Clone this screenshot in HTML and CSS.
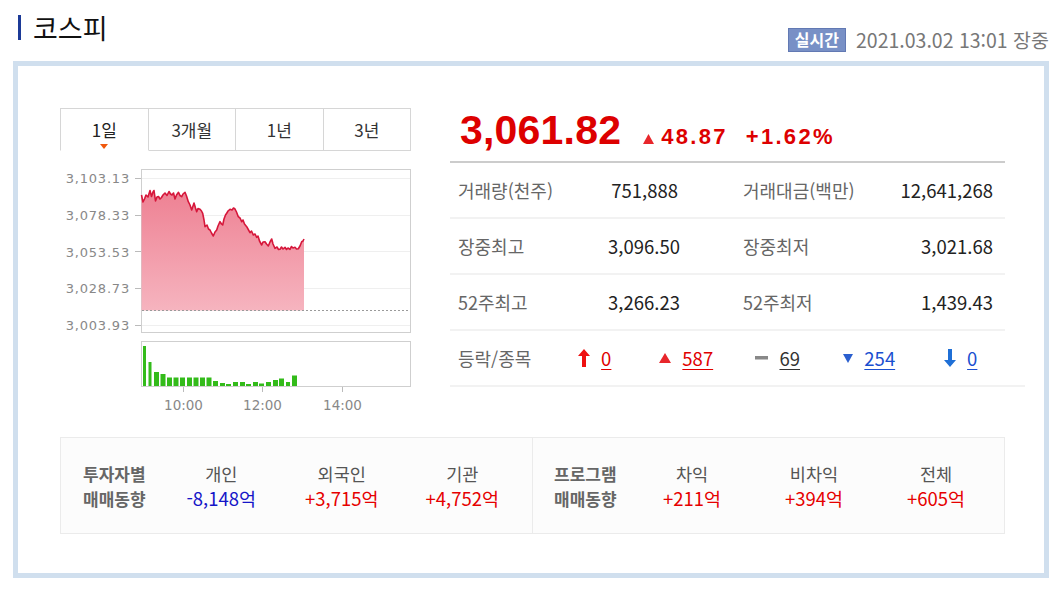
FILE: index.html
```html
<!DOCTYPE html>
<html lang="ko">
<head>
<meta charset="utf-8">
<title>코스피</title>
<link rel="stylesheet" href="styles.css">
</head>
<body>
<div class="header">
  <h1 class="title">코스피</h1>
  <div class="meta"><span class="badge">실시간</span><span class="date">2021.03.02 13:01 장중</span></div>
</div>
<div class="panel">
  <div class="top">
    <div class="chartcol">
      <ul class="tabs">
        <li class="on">1일<i class="caret"></i></li>
        <li>3개월</li>
        <li>1년</li>
        <li>3년</li>
      </ul>
      <svg class="chart" width="351" height="264" viewBox="0 0 351 264">
        <defs>
          <linearGradient id="fillg" x1="0" y1="0" x2="0" y2="1">
            <stop offset="0" stop-color="#ee8193"/>
            <stop offset="1" stop-color="#f6b4bf"/>
          </linearGradient>
        </defs>
        <g transform="translate(-60,-151)">
          <rect x="141.5" y="169.5" width="269" height="163" fill="#fff" stroke="#cfcfcf"/>
          <g stroke="#efefef" stroke-width="1">
            <line x1="142" y1="178.5" x2="410" y2="178.5"/>
            <line x1="142" y1="215.5" x2="410" y2="215.5"/>
            <line x1="142" y1="251.5" x2="410" y2="251.5"/>
            <line x1="142" y1="288.5" x2="410" y2="288.5"/>
            <line x1="142" y1="325.5" x2="410" y2="325.5"/>
          </g>
          <g stroke="#bbb" stroke-width="1">
            <line x1="135" y1="178.5" x2="141" y2="178.5"/>
            <line x1="135" y1="215.5" x2="141" y2="215.5"/>
            <line x1="135" y1="251.5" x2="141" y2="251.5"/>
            <line x1="135" y1="288.5" x2="141" y2="288.5"/>
            <line x1="135" y1="325.5" x2="141" y2="325.5"/>
          </g>
          <g class="ylab">
            <text x="130" y="178.5">3,103.13</text>
            <text x="130" y="215.5">3,078.33</text>
            <text x="130" y="252">3,053.53</text>
            <text x="130" y="288.5">3,028.73</text>
            <text x="130" y="325.5">3,003.93</text>
          </g>
          <path d="M141.5,310.5 L141.5,195 143,202 144.5,199 146,195 148,197 150,190.5 151.5,196.5 153,192 154,190.5 155.5,201 157,197 158.5,196.5 160,199 161.5,197.5 163,195 165,193 167,195.5 169,191.5 170.5,194 172,195 173.5,193 175,199 176.5,195 178.5,192.3 180,195.5 181.7,196.7 183,194 185,192.3 186.5,196 188.3,201.7 190,205 191.7,210 193,206 194,203 195.5,208 196.7,211.7 198,208.5 200,209.3 201.5,211 202.7,213.3 204,220 205,226.7 207,225 208.5,229 210,230 211.5,233 213.3,236 215,232 216.7,230 218,226 220,221.7 221.5,224 222.7,225 224,219 225.5,215 226.7,213.3 228,211 230,209.3 232,210 233.5,208 235,209 236.5,212 238.3,216.7 240,218 241.7,221.7 243,220 244.5,224 246.7,226.7 248,229 250,232.7 251.5,231 253.3,235 255,234 256.7,237.3 258,236 259.5,241 261.7,245 263,242 265,241.7 266.5,244 268.3,246 270,242 271.7,239 273,244 275,248.3 277,247 278.5,249.5 280,249.3 281.5,247 283,249 285,247.3 286.5,249.5 288,248 290,249.3 291.5,246.5 293,248 295,247.3 296.5,249 298.3,248.7 300,246 301.7,241.7 303,241 304,239 L304,310.5 Z" fill="url(#fillg)"/>
          <polyline fill="none" stroke="#d6173b" stroke-width="1.6" stroke-linejoin="round" points="141.5,195 143,202 144.5,199 146,195 148,197 150,190.5 151.5,196.5 153,192 154,190.5 155.5,201 157,197 158.5,196.5 160,199 161.5,197.5 163,195 165,193 167,195.5 169,191.5 170.5,194 172,195 173.5,193 175,199 176.5,195 178.5,192.3 180,195.5 181.7,196.7 183,194 185,192.3 186.5,196 188.3,201.7 190,205 191.7,210 193,206 194,203 195.5,208 196.7,211.7 198,208.5 200,209.3 201.5,211 202.7,213.3 204,220 205,226.7 207,225 208.5,229 210,230 211.5,233 213.3,236 215,232 216.7,230 218,226 220,221.7 221.5,224 222.7,225 224,219 225.5,215 226.7,213.3 228,211 230,209.3 232,210 233.5,208 235,209 236.5,212 238.3,216.7 240,218 241.7,221.7 243,220 244.5,224 246.7,226.7 248,229 250,232.7 251.5,231 253.3,235 255,234 256.7,237.3 258,236 259.5,241 261.7,245 263,242 265,241.7 266.5,244 268.3,246 270,242 271.7,239 273,244 275,248.3 277,247 278.5,249.5 280,249.3 281.5,247 283,249 285,247.3 286.5,249.5 288,248 290,249.3 291.5,246.5 293,248 295,247.3 296.5,249 298.3,248.7 300,246 301.7,241.7 303,241 304,239"/>
          <line x1="142" y1="310.5" x2="410" y2="310.5" stroke="#9a9a9a" stroke-dasharray="2,2"/>
          <rect x="141.5" y="341.5" width="269" height="45" fill="#fff" stroke="#cfcfcf"/>
          <g fill="#33bb1a">
            <rect x="143" y="346" width="3" height="40"/>
            <rect x="148.5" y="362" width="3" height="24"/>
            <rect x="154" y="372" width="5" height="14"/>
            <rect x="160.5" y="374" width="5" height="12"/>
            <rect x="167" y="377.5" width="5" height="8.5"/>
            <rect x="173.5" y="377.5" width="5" height="8.5"/>
            <rect x="180" y="377.5" width="5" height="8.5"/>
            <rect x="187" y="377.5" width="5" height="8.5"/>
            <rect x="193.5" y="377.5" width="5" height="8.5"/>
            <rect x="200" y="377.5" width="5" height="8.5"/>
            <rect x="206.5" y="377.5" width="5" height="8.5"/>
            <rect x="213" y="381" width="5" height="5"/>
            <rect x="220" y="383" width="5" height="3"/>
            <rect x="226" y="384" width="5" height="2"/>
            <rect x="233" y="382" width="5" height="4"/>
            <rect x="240" y="382" width="5" height="4"/>
            <rect x="246" y="384" width="5" height="2"/>
            <rect x="253" y="382" width="5" height="4"/>
            <rect x="259" y="383.5" width="5" height="2.5"/>
            <rect x="266" y="382" width="5" height="4"/>
            <rect x="273" y="380" width="5" height="6"/>
            <rect x="279" y="378.5" width="5" height="7.5"/>
            <rect x="286" y="382" width="4" height="4"/>
            <rect x="292" y="375.5" width="5" height="10.5"/>
          </g>
          <g stroke="#bbb">
            <line x1="183.5" y1="387" x2="183.5" y2="392"/>
            <line x1="262.5" y1="387" x2="262.5" y2="392"/>
            <line x1="342.5" y1="387" x2="342.5" y2="392"/>
          </g>
          <g class="xlab">
            <text x="183.5" y="404.5">10:00</text>
            <text x="262.5" y="404.5">12:00</text>
            <text x="342.5" y="404.5">14:00</text>
          </g>
        </g>
      </svg>
    </div>
    <div class="infocol">
      <div class="price">
        <span class="now">3,061.82</span>
        <span class="chg"><svg class="tri" width="11" height="10" viewBox="0 0 11 10"><polygon points="5.5,0 11,10 0,10" fill="#e8262b"/></svg>48.87</span>
        <span class="rate">+1.62%</span>
      </div>
      <div class="row">
        <span class="lb">거래량(천주)</span><span class="val">751,888</span><span></span>
        <span class="lb">거래대금(백만)</span><span class="val">12,641,268</span>
      </div>
      <div class="row">
        <span class="lb">장중최고</span><span class="val">3,096.50</span><span></span>
        <span class="lb">장중최저</span><span class="val">3,021.68</span>
      </div>
      <div class="row">
        <span class="lb">52주최고</span><span class="val">3,266.23</span><span></span>
        <span class="lb">52주최저</span><span class="val">1,439.43</span>
      </div>
      <div class="updown">
        <span class="lb ulb">등락/종목</span>
        <span class="ud"><svg width="12" height="18" viewBox="0 0 12 18"><polygon points="6,0 12,7 8,7 8,18 4,18 4,7 0,7" fill="#ee1111"/></svg><a class="n red">0</a></span>
        <span class="ud"><svg width="12" height="10" viewBox="0 0 12 10"><polygon points="6,0 12,10 0,10" fill="#e8262b"/></svg><a class="n red">587</a></span>
        <span class="ud"><svg width="13" height="4" viewBox="0 0 13 4"><rect x="0" y="0" width="13" height="3.5" fill="#888"/></svg><a class="n gray">69</a></span>
        <span class="ud"><svg width="10" height="9" viewBox="0 0 10 9"><polygon points="0,0 10,0 5,9" fill="#2a5fcf"/></svg><a class="n blue">254</a></span>
        <span class="ud"><svg width="12" height="18" viewBox="0 0 12 18"><polygon points="4,0 8,0 8,11 12,11 6,18 0,11 4,11" fill="#1f6fd6"/></svg><a class="n blue">0</a></span>
      </div>
    </div>
  </div>
  <div class="trade">
    <div class="group g1">
      <div class="glabel">투자자별<br>매매동향</div>
      <div class="cell"><div class="cname">개인</div><div class="cval minus">-8,148억</div></div>
      <div class="cell"><div class="cname">외국인</div><div class="cval plus">+3,715억</div></div>
      <div class="cell"><div class="cname">기관</div><div class="cval plus">+4,752억</div></div>
    </div>
    <div class="group g2">
      <div class="glabel">프로그램<br>매매동향</div>
      <div class="cell"><div class="cname">차익</div><div class="cval plus">+211억</div></div>
      <div class="cell"><div class="cname">비차익</div><div class="cval plus">+394억</div></div>
      <div class="cell"><div class="cname">전체</div><div class="cval plus">+605억</div></div>
    </div>
  </div>
</div>
</body>
</html>
```

FILE: styles.css
```css
* { box-sizing: border-box; }
body {
  margin: 0;
  width: 1059px;
  background: #fff;
  color: #333;
  font-family: "Noto Sans CJK KR", "Noto Sans", sans-serif;
}
.header {
  display: flex;
  justify-content: space-between;
  height: 61px;
  padding: 0 10px 0 18px;
}
.title {
  margin: 15px 0 0;
  height: 25px;
  border-left: 3px solid #1c3a97;
  padding-left: 12px;
  font-size: 27px;
  font-weight: 400;
  line-height: 25px;
  color: #111;
}
.meta {
  display: flex;
  align-items: center;
  gap: 10px;
  height: 24px;
  margin-top: 28px;
}
.badge {
  height: 24px;
  padding: 0 6px;
  background: #7890c6;
  border: 1px solid #6279b3;
  color: #fff;
  font-size: 16px;
  font-weight: 700;
  line-height: 21px;
}
.date {
  font-size: 19.5px;
  line-height: 24px;
  color: #777;
}
.panel {
  width: 1036px;
  margin-left: 13px;
  border: 5px solid #d0dfee;
  padding: 42px 0 39px 42px;
}
.top {
  display: flex;
  gap: 39px;
  height: 329px;
}
.chartcol { width: 351px; }
.tabs {
  display: flex;
  margin: 0;
  padding: 0;
  list-style: none;
  height: 43px;
}
.tabs li {
  position: relative;
  flex: 1;
  height: 43px;
  border: 1px solid #d6d6d6;
  text-align: center;
  font-size: 17px;
  line-height: 41px;
  color: #333;
}
.tabs li + li { border-left: none; }
.tabs li.on { border-bottom-color: #fff; color: #222; }
.caret {
  position: absolute;
  left: 39px;
  top: 35px;
  width: 0;
  height: 0;
  border-left: 4.5px solid transparent;
  border-right: 4.5px solid transparent;
  border-top: 5px solid #f0580c;
}
.chart { display: block; }
.ylab text {
  font-family: "DejaVu Sans", sans-serif;
  font-size: 13px;
  fill: #888;
  text-anchor: end;
  dominant-baseline: central;
  letter-spacing: 0.8px;
}
.xlab text {
  font-family: "DejaVu Sans", sans-serif;
  font-size: 13.5px;
  fill: #888;
  text-anchor: middle;
  dominant-baseline: central;
}
.infocol { width: 575px; }
.price {
  display: flex;
  align-items: baseline;
  width: 555px;
  height: 55px;
  padding: 0 0 0 10px;
  border-bottom: 2px solid #cccccc;
  font-family: "Liberation Sans", Arial, sans-serif;
  font-weight: 700;
  color: #dd0000;
  line-height: 44px;
}
.now { font-size: 41px; letter-spacing: 0.2px; }
.chg, .rate { font-size: 22px; letter-spacing: 2.3px; }
.chg { margin-left: 22px; }
.tri { margin-right: 7px; }
.rate { margin-left: 18px; }
.row {
  display: grid;
  grid-template-columns: 150px 70px 65px 150px 100px;
  align-items: center;
  width: 555px;
  height: 56px;
  padding-left: 8px;
  border-bottom: 2px solid #f2f2f2;
}
.lb { font-size: 18px; color: #666; }
.val { font-size: 18.5px; color: #222; text-align: right; }
.updown {
  display: flex;
  align-items: center;
  width: 575px;
  height: 56px;
  border-bottom: 2px solid #f2f2f2;
}
.ulb { width: 99px; padding-left: 8px; }
.ud {
  display: flex;
  align-items: center;
  justify-content: center;
  gap: 11px;
  width: 91.5px;
}
.ud svg { display: block; }
.n { font-size: 18.5px; text-decoration: underline; text-underline-offset: 3px; }
.red { color: #e00000; }
.gray { color: #333; }
.blue { color: #1a4fd0; }
.trade {
  display: flex;
  width: 945px;
  height: 97px;
  border: 1px solid #ebebeb;
  background: #fcfcfc;
}
.group { display: flex; align-items: center; }
.g1 { width: 472px; padding-left: 22px; border-right: 1px solid #ebebeb; }
.g2 { flex: 1; padding-left: 21px; }
.glabel {
  width: 78px;
  font-size: 17px;
  font-weight: 700;
  line-height: 25px;
  color: #666;
}
.g2 .glabel { width: 77px; }
.cell { width: 120.5px; text-align: center; line-height: 25px; }
.g2 .cell { width: 122px; }
.cname { font-size: 17.5px; color: #555; }
.cval { font-size: 18.5px; }
.minus { color: #1515c8; }
.plus { color: #e60000; }
```
